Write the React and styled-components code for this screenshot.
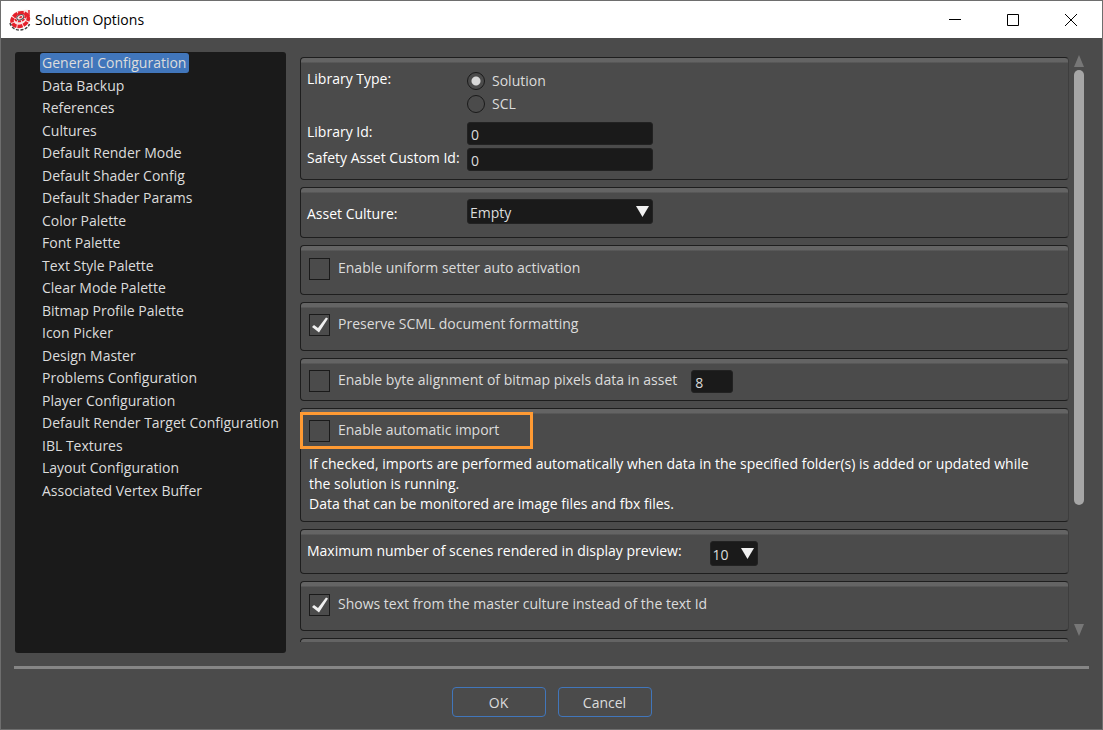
import React from "react";
import styled, { createGlobalStyle } from "styled-components";

const Global = createGlobalStyle`
  * { box-sizing: border-box; }
  body { margin: 0; background: #6e6e6e; }
  body, button, input, select { font-family: "Open Sans", "Noto Sans", sans-serif; font-size: 14px; }
`;

const Window = styled.div`
  height: 100vh;
  min-height: 480px;
  display: flex;
  flex-direction: column;
  background: #4b4b4b;
  border: 1px solid #6e6e6e;
  color: #fff;
  line-height: 20px;
`;

const TitleBar = styled.header`
  display: flex;
  align-items: center;
  height: 37px;
  flex: none;
  padding: 0 2px 0 8px;
  background: #fff;
  color: #000;
`;

const Title = styled.h1`
  flex: 1;
  margin: 0 0 0 4px;
  font-size: 14px;
  font-weight: 400;
`;

const WindowButton = styled.button`
  width: 58px;
  height: 36px;
  display: grid;
  place-items: center;
  padding: 0;
  border: 0;
  background: none;
`;

const Body = styled.main`
  flex: 1;
  min-height: 0;
  display: flex;
  gap: 14px;
  padding: 14px 17px 13px 14px;
`;

const Sidebar = styled.nav`
  width: 271px;
  flex: none;
  padding-top: 1px;
  overflow: hidden;
  background: #1a1a1a;
  border-radius: 3px;
`;

const NavList = styled.ul`
  display: grid;
  grid-auto-rows: 1fr;
  height: 450px;
  margin: 0;
  padding: 0 0 0 25px;
  list-style: none;
`;

const NavLink = styled.a`
  display: inline-block;
  padding: 0 3px 0 2px;
  border-radius: 3px;
  color: #dcdcdc;
  background: ${(p) => (p.$active ? "#4176bb" : "transparent")};
  text-decoration: none;
  white-space: nowrap;
`;

const Settings = styled.form`
  flex: 1;
  min-width: 0;
  display: flex;
  flex-direction: column;
  gap: 7px;
  margin-bottom: 11px;
  padding-top: 5px;
  overflow: hidden;
`;

const Panel = styled.section`
  position: relative;
  flex: none;
  min-height: ${(p) => p.$min || 50}px;
  padding: ${(p) => p.$top || 12}px 8px 0 ${(p) => p.$left || 8}px;
  border: 1px solid #1e1e1e;
  border-right-color: #3e3e3e;
  border-radius: 4px;
  background: linear-gradient(#646464 0, #646464 4px, #4b4b4b 5px);
`;

const FieldGrid = styled.div`
  display: grid;
  grid-template-columns: 160px 186px;
  align-items: ${(p) => p.$align || "start"};
  row-gap: 3px;
`;

const FieldLabel = styled.label`
  white-space: nowrap;
`;

const RadioGroup = styled.div`
  display: grid;
  gap: 3px;
  padding: 2px 0 5px;
`;

const RadioLabel = styled.label`
  display: flex;
  align-items: center;
  gap: 7px;
  color: #dcdcdc;
`;

const Radio = styled.input`
  appearance: none;
  width: 18px;
  height: 18px;
  margin: 0;
  border: 1px solid #1a1a1a;
  border-radius: 50%;
  &:checked { background: radial-gradient(circle, #d8d8d8 4px, transparent 5px); }
`;

const TextBox = styled.input`
  width: ${(p) => p.$width || "100%"};
  height: 23px;
  padding: 1px 3px 0;
  border: 1px solid #222;
  border-radius: 3px;
  background: #1a1a1a;
  color: #dcdcdc;
`;

const SelectWrap = styled.div`
  position: relative;
  width: ${(p) => p.$width || "100%"};
  height: 25px;
  svg { position: absolute; right: 4px; top: 7px; pointer-events: none; }
`;

const Select = styled.select`
  appearance: none;
  width: 100%;
  height: 100%;
  padding: 1px 2px 0;
  border: 1px solid #222;
  border-radius: 3px;
  background: #1a1a1a;
  color: #dcdcdc;
`;

const Row = styled.div`
  display: flex;
  align-items: flex-start;
  gap: ${(p) => p.$gap || 8}px;
`;

const CheckLabel = styled.label`
  display: flex;
  gap: 8px;
  color: #dcdcdc;
`;

const CheckBox = styled.span`
  position: relative;
  width: 21px;
  height: 22px;
  input {
    appearance: none;
    display: block;
    width: 21px;
    height: 22px;
    margin: 0;
    border: 1px solid #1a1a1a;
  }
  svg { position: absolute; left: 1px; top: 2px; visibility: hidden; pointer-events: none; }
  input:checked + svg { visibility: visible; }
`;

const Highlight = styled.div`
  position: absolute;
  top: 3px;
  left: -1px;
  width: 233px;
  height: 37px;
  border: 3px solid #ff9a33;
  pointer-events: none;
`;

const Note = styled.p`
  margin: 12px 0 0;
  max-width: 744px;
`;

const ScrollBar = styled.div`
  flex: none;
  width: 10px;
  display: flex;
  flex-direction: column;
  gap: 3px;
  margin: 3px 1px 17px -9px;
  svg { flex: none; }
`;

const Track = styled.div`
  flex: 1;
`;

const Thumb = styled.div`
  height: 79%;
  border-radius: 5px;
  background: #a6a6a6;
`;

const Footer = styled.footer`
  flex: none;
  display: flex;
  justify-content: center;
  gap: 12px;
  margin: 0 13px;
  padding: 18px 0 12px;
  border-top: 3px solid #868686;
`;

const DialogButton = styled.button`
  width: 94px;
  height: 30px;
  padding: 0;
  border: 1px solid #4176bb;
  border-radius: 4px;
  background: transparent;
  color: #dcdcdc;
`;

const pages = [
  "General Configuration", "Data Backup", "References", "Cultures", "Default Render Mode",
  "Default Shader Config", "Default Shader Params", "Color Palette", "Font Palette",
  "Text Style Palette", "Clear Mode Palette", "Bitmap Profile Palette", "Icon Picker",
  "Design Master", "Problems Configuration", "Player Configuration",
  "Default Render Target Configuration", "IBL Textures", "Layout Configuration",
  "Associated Vertex Buffer",
];

function Logo() {
  return (
    <svg width="22" height="22" viewBox="0 0 22 22" aria-hidden="true">
      <path d="M20 1C11 0 3 3 1.500 10c-1 5 3 9 8 9 6 0 11-5 10.500-12z" fill="#fbe4e4" />
      <g fill="none" transform="rotate(-24 11 9)">
        <ellipse cx="10.500" cy="10.500" rx="8.500" ry="6.500" stroke="#e5202b" strokeWidth="3.600" strokeDasharray="5 1" />
        <ellipse cx="11.500" cy="8.500" rx="5.400" ry="3.800" stroke="#e5202b" strokeWidth="1.800" strokeDasharray="3 1" />
        <ellipse cx="11.500" cy="8.500" rx="3.600" ry="2.400" stroke="#555" strokeWidth="1" />
        <ellipse cx="12" cy="8.500" rx="1.600" ry="1" fill="#e5202b" />
      </g>
      <path d="M1 14c1 4 5 7 9 7 5 0 9-2 10.500-6" fill="none" stroke="#444" strokeWidth="1.500" strokeDasharray="3 1.500" />
      <path d="M20 1v6" stroke="#e5202b" strokeWidth="1.500" />
    </svg>
  );
}

function Arrow() {
  return (
    <svg width="13" height="11" viewBox="0 0 13 11" aria-hidden="true">
      <path d="M0 0h13L6.500 11z" fill="#f0f0f0" />
    </svg>
  );
}

function Check({ label, checked }) {
  return (
    <CheckLabel>
      <CheckBox>
        <input type="checkbox" defaultChecked={checked} />
        <svg width="20" height="19" viewBox="0 0 20 19" aria-hidden="true">
          <path d="M2 11l2-2 4 3L16 1.500l2 1L9 16.500z" fill="#f0f0f0" />
        </svg>
      </CheckBox>
      {label}
    </CheckLabel>
  );
}

export default function App() {
  return (
    <>
      <Global />
      <Window>
        <TitleBar>
          <Logo />
          <Title>Solution Options</Title>
          <WindowButton aria-label="Minimize">
            <svg width="12" height="12"><path d="M0 5.500h12" stroke="#000" /></svg>
          </WindowButton>
          <WindowButton aria-label="Maximize">
            <svg width="12" height="12"><path d="M.5.5h11v11H.5z" fill="none" stroke="#000" /></svg>
          </WindowButton>
          <WindowButton aria-label="Close">
            <svg width="12" height="12"><path d="M0 0l12 12M12 0L0 12" stroke="#000" /></svg>
          </WindowButton>
        </TitleBar>
        <Body>
          <Sidebar>
            <NavList>
              {pages.map((name, i) => (
                <li key={name}><NavLink href="#" $active={i === 0}>{name}</NavLink></li>
              ))}
            </NavList>
          </Sidebar>
          <Settings>
            <Panel $min={123} $top={11} $left={6}>
              <FieldGrid>
                <span>Library Type:</span>
                <RadioGroup role="radiogroup" aria-label="Library Type">
                  <RadioLabel><Radio type="radio" name="type" defaultChecked />Solution</RadioLabel>
                  <RadioLabel><Radio type="radio" name="type" />SCL</RadioLabel>
                </RadioGroup>
                <FieldLabel htmlFor="lib">Library Id:</FieldLabel>
                <TextBox id="lib" defaultValue="0" />
                <FieldLabel htmlFor="safety">Safety Asset Custom Id:</FieldLabel>
                <TextBox id="safety" defaultValue="0" />
              </FieldGrid>
            </Panel>
            <Panel $min={51} $top={11} $left={6}>
              <FieldGrid $align="end">
                <FieldLabel htmlFor="culture">Asset Culture:</FieldLabel>
                <SelectWrap>
                  <Select id="culture"><option>Empty</option></Select>
                  <Arrow />
                </SelectWrap>
              </FieldGrid>
            </Panel>
            <Panel><Check label="Enable uniform setter auto activation" /></Panel>
            <Panel $min={49} $top={11}><Check label="Preserve SCML document formatting" checked /></Panel>
            <Panel $min={43} $top={11}>
              <Row $gap={14}>
                <Check label="Enable byte alignment of bitmap pixels data in asset" />
                <TextBox $width="42px" aria-label="Byte alignment" defaultValue="8" />
              </Row>
            </Panel>
            <Panel $min={114} $top={11}>
              <Check label="Enable automatic import" />
              <Note>
                If checked, imports are performed automatically when data in the specified folder(s) is added or updated while the solution is running.
                <br />
                Data that can be monitored are image files and fbx files.
              </Note>
              <Highlight />
            </Panel>
            <Panel $min={45} $top={11} $left={6}>
              <Row $gap={28}>
                <FieldLabel htmlFor="scenes">Maximum number of scenes rendered in display preview:</FieldLabel>
                <SelectWrap $width="48px">
                  <Select id="scenes"><option>10</option></Select>
                  <Arrow />
                </SelectWrap>
              </Row>
            </Panel>
            <Panel><Check label="Shows text from the master culture instead of the text Id" checked /></Panel>
            <Panel />
          </Settings>
          <ScrollBar aria-hidden="true">
            <svg width="10" height="12"><path d="M5 0l5 12H0z" fill="#777" /></svg>
            <Track><Thumb /></Track>
            <svg width="10" height="12"><path d="M0 0h10L5 12z" fill="#777" /></svg>
          </ScrollBar>
        </Body>
        <Footer>
          <DialogButton>OK</DialogButton>
          <DialogButton>Cancel</DialogButton>
        </Footer>
      </Window>
    </>
  );
}
